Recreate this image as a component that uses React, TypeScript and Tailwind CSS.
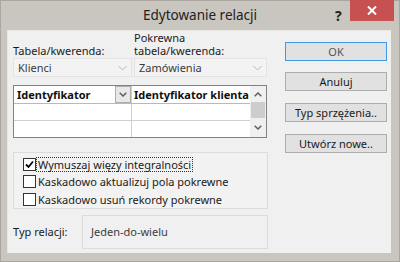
import React from "react";

const font = { fontFamily: '"Noto Sans", "Open Sans", sans-serif' };

function Chevron({ className = "", up }: { className?: string; up?: boolean }) {
  return (
    <svg width="9" height="6" viewBox="0 0 9 6" className={className}>
      <path
        d={up ? "M0.5 5 L4.5 1 L8.5 5" : "M0.5 1 L4.5 5 L8.5 1"}
        fill="none"
        stroke="currentColor"
        strokeWidth="1"
      />
    </svg>
  );
}

function SmallChevron({ up }: { up?: boolean }) {
  return (
    <svg width="8" height="5" viewBox="0 0 8 5">
      <path
        d={up ? "M0.7 4.3 L4 1 L7.3 4.3" : "M0.7 0.7 L4 4 L7.3 0.7"}
        fill="none"
        stroke="#606060"
        strokeWidth="1.5"
      />
    </svg>
  );
}

function Combo({ label, width }: { label: string; width: string }) {
  return (
    <div
      className={`flex h-[19px] items-center justify-between border border-[#e3e3e3] bg-[#f3f3f3] pl-[4px] pr-[4px] ${width}`}
    >
      <span className="text-[11px] leading-none text-[#3a3a3a]">{label}</span>
      <Chevron className="text-[#b8b8b8]" />
    </div>
  );
}

function Check({ checked, label, focus }: { checked?: boolean; label: string; focus?: boolean }) {
  return (
    <div className="flex h-[18px] items-center">
      <div className="flex h-[13px] w-[13px] items-center justify-center border border-[#333] bg-white">
        {checked && (
          <svg width="9" height="9" viewBox="0 0 9 9">
            <path d="M1 4.5 L3.5 7 L8 1.5" fill="none" stroke="#000" strokeWidth="1.8" />
          </svg>
        )}
      </div>
      <span
        className={`px-[1px] text-[11px] leading-[13px] text-[#1a1a1a] ${
          focus ? "border border-dotted border-[#333]" : "border border-transparent"
        }`}
      >
        {label}
      </span>
    </div>
  );
}

function Btn({ children, primary, className = "" }: { children: React.ReactNode; primary?: boolean; className?: string }) {
  return (
    <button
      className={`flex h-[19px] w-[102px] items-center justify-center bg-[#e1e1e1] text-[11px] leading-none ${
        primary ? "border border-[#3c99e8] text-[#555]" : "border border-[#adadad] text-[#1a1a1a]"
      } ${className}`}
    >
      {children}
    </button>
  );
}

export default function App() {
  return (
    <div className="flex h-[262px] w-[400px] flex-col border border-[#aaa69f] bg-[#c9c5bf]" style={font}>
      {/* title bar */}
      <div className="relative flex h-[29px] shrink-0 items-start justify-center">
        <span className="mt-[5px] text-[13.5px] leading-[18px] text-[#222]">Edytowanie relacji</span>
        <span className="absolute left-[334px] top-[4px] text-[14px] font-bold text-[#222]">?</span>
        <div className="absolute left-[349px] top-[-1px] flex h-[21px] w-[44px] items-center justify-center bg-[#c75050]">
          <svg width="10" height="9" viewBox="0 0 10 9">
            <path d="M1 0.5 L9 8.5 M9 0.5 L1 8.5" stroke="#fff" strokeWidth="2" />
          </svg>
        </div>
      </div>

      {/* client area */}
      <div className="ml-[6px] mr-[8px] flex h-[223px] border-t border-l border-[#e9e7e4] bg-[#f0f0f0]">
        <div className="ml-[5px] flex w-[256px] flex-col">
          <div className="flex items-end text-[11px] leading-[13px] text-[#1a1a1a]">
            <div className="w-[121px]">Tabela/kwerenda:</div>
            <div>
              Pokrewna
              <br />
              tabela/kwerenda:
            </div>
          </div>
          <div className="mt-[1px] flex gap-[2px]">
            <Combo label="Klienci" width="w-[119px]" />
            <Combo label="Zamówienia" width="w-[133px]" />
          </div>

          {/* grid */}
          <div className="mt-[8px] flex h-[53px] w-[254px] border border-[#828282] bg-white">
            <div className="flex flex-1 flex-col">
              <div className="flex h-[18px] border-b border-[#b9b9b9]">
                <div className="flex w-[118px] items-center justify-between border-r border-[#d0d0d0] pl-[3px]">
                  <span className="text-[11px] font-bold leading-none text-[#111]">Identyfikator</span>
                  <div className="flex h-[17px] w-[16px] items-center justify-center border border-[#adadad] bg-[#e8e8e8]">
                    <SmallChevron />
                  </div>
                </div>
                <div className="flex flex-1 items-center overflow-hidden whitespace-nowrap pl-[2px]">
                  <span className="text-[11px] font-bold leading-none text-[#111]">Identyfikator klienta</span>
                </div>
              </div>
              <div className="flex h-[17px] border-b border-[#d0d0d0]">
                <div className="w-[118px] border-r border-[#d0d0d0]" />
              </div>
              <div className="flex flex-1">
                <div className="w-[118px] border-r border-[#d0d0d0]" />
              </div>
            </div>
            <div className="flex w-[16px] flex-col items-center bg-[#f0f0f0]">
              <div className="flex h-[16px] items-center justify-center">
                <SmallChevron up />
              </div>
              <div className="h-[16px] w-[14px] bg-[#cdcdcd]" />
              <div className="flex flex-1 items-center justify-center">
                <SmallChevron />
              </div>
            </div>
          </div>

          {/* options */}
          <div className="mt-[14px] flex h-[57px] w-[255px] flex-col border border-[#dcdcdc] bg-[#f2f2f2] pl-[9px] pt-[3px]">
            <Check checked focus label="Wymuszaj więzy integralności" />
            <Check label="Kaskadowo aktualizuj pola pokrewne" />
            <Check label="Kaskadowo usuń rekordy pokrewne" />
          </div>

          <div className="mt-[6px] flex items-center">
            <span className="w-[69px] text-[11px] text-[#1a1a1a]">Typ relacji:</span>
            <div className="flex h-[34px] w-[186px] items-center border border-[#dcdcdc] pl-[8px] text-[11px] text-[#3c3c3c]">
              Jeden-do-wielu
            </div>
          </div>
        </div>

        <div className="ml-[16px] mt-[11px] flex flex-col">
          <Btn primary>OK</Btn>
          <Btn className="mt-[11px]">Anuluj</Btn>
          <Btn className="mt-[12px]">Typ sprzężenia..</Btn>
          <Btn className="mt-[12px]">Utwórz nowe..</Btn>
        </div>
      </div>
    </div>
  );
}
